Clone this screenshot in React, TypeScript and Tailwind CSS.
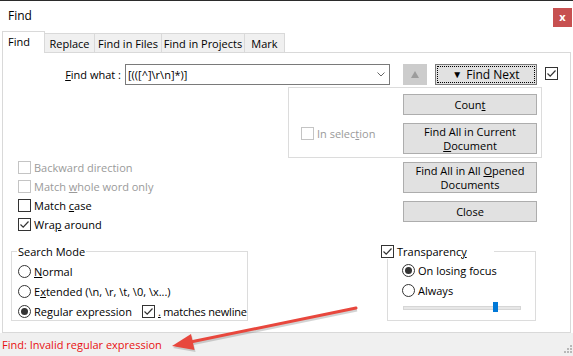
import React from "react";

const FONT = "'Open Sans', 'Liberation Sans', sans-serif";

function CheckBox(props: { checked?: boolean; disabled?: boolean }) {
  return (
    <span
      className={
        "inline-flex w-[13px] h-[13px] shrink-0 border bg-white items-center justify-center " +
        (props.disabled ? "border-[#c4c4c4]" : "border-[#333333]")
      }
    >
      {props.checked && (
        <svg width="11" height="11" viewBox="0 0 11 11">
          <path d="M1.5 5.5 L4.2 8.2 L9.5 2.5" fill="none" stroke="#333" strokeWidth="1.2" />
        </svg>
      )}
    </span>
  );
}

function Radio(props: { checked?: boolean }) {
  return (
    <span className="inline-flex w-[13px] h-[13px] shrink-0 rounded-full border border-[#333333] bg-white items-center justify-center">
      {props.checked && <span className="w-[7px] h-[7px] rounded-full bg-[#333333]" />}
    </span>
  );
}

function Btn(props: { children: React.ReactNode; tall?: boolean; className?: string }) {
  return (
    <div
      className={
        "w-[134px] flex flex-col items-center justify-center bg-[#e1e1e1] border border-[#adadad] text-black leading-[14px] text-center " +
        (props.tall ? "h-[31px] " : "h-[21px] ") +
        (props.className ?? "")
      }
    >
      {props.children}
    </div>
  );
}

function CheckRow(props: { checked?: boolean; disabled?: boolean; children: React.ReactNode }) {
  return (
    <div className="h-[19px] flex items-center gap-[3px] pl-[15px]">
      <CheckBox checked={props.checked} disabled={props.disabled} />
      <span className={props.disabled ? "text-[#9a9a9a]" : "text-black"}>{props.children}</span>
    </div>
  );
}

const tabs = [
  { name: "Replace", w: "w-[50px]" },
  { name: "Find in Files", w: "w-[67px]" },
  { name: "Find in Projects", w: "w-[83px]" },
  { name: "Mark", w: "w-[40px]" },
];

export default function App() {
  return (
    <div
      className="relative w-[573px] h-[356px] bg-white border-t border-[#2b2b2b] flex flex-col text-[11px] leading-[15px] text-black overflow-hidden"
      style={{ fontFamily: FONT }}
    >
      {/* title bar */}
      <div className="h-[30px] flex items-start justify-between">
        <div className="pl-[8px] pt-[7px] text-[12px]">Find</div>
        <div className="mt-[7px] mr-[1px] w-[19px] h-[19px] bg-[#c75050] flex items-center justify-center text-white text-[11px] font-bold leading-none pb-[2px]">
          x
        </div>
      </div>

      {/* tabs */}
      <div className="h-[21px] flex items-end pl-[2px]">
        <div className="relative z-10 -mb-px h-[22px] w-[43px] bg-white border border-b-0 border-[#d9d9d9] pl-[5px] pt-[2px]">
          Find
        </div>
        {tabs.map((t) => (
          <div
            key={t.name}
            className={
              "h-[19px] bg-[#f0f0f0] border border-l-0 border-b-0 border-[#d9d9d9] flex items-center justify-center " +
              t.w
            }
          >
            {t.name}
          </div>
        ))}
      </div>

      {/* pane */}
      <div className="flex-1 mx-[2px] border border-[#d9d9d9] flex flex-col">
        {/* find what row */}
        <div className="mt-[11px] flex items-center h-[21px]">
          <div className="w-[118px] text-right">
            <u>F</u>ind what :
          </div>
          <div className="ml-[4px] w-[265px] h-[21px] border border-[#7a7a7a] flex items-center justify-between pl-[2px] pr-[4px]">
            <span>{"[(([^]\\r\\n]*)]"}</span>
            <svg width="8" height="5" viewBox="0 0 8 5">
              <path d="M0.5 0.5 L4 4 L7.5 0.5" fill="none" stroke="#666" strokeWidth="1" />
            </svg>
          </div>
          <div className="ml-[13px] w-[24px] h-[21px] bg-[#cccccc] flex items-center justify-center">
            <svg width="8" height="7" viewBox="0 0 8 7">
              <path d="M4 0 L8 7 L0 7 Z" fill="#9c9c9c" />
            </svg>
          </div>
          <div className="ml-[8px] w-[102px] h-[21px] bg-[#e1e1e1] border border-[#7a7a7a] outline-1 outline-dotted outline-black outline-offset-[-3px] flex items-center justify-center gap-[4px] text-[12px]">
            <span className="text-[10px]">▼</span>
            <span>Find Next</span>
          </div>
          <div className="ml-[8px]">
            <CheckBox checked />
          </div>
        </div>

        {/* middle area */}
        <div className="flex h-[149px]">
          <div className="w-[285px] pt-[73px]">
            <CheckRow disabled>Backward direction</CheckRow>
            <CheckRow disabled>
              Match <u>w</u>hole word only
            </CheckRow>
            <CheckRow>
              Match <u>c</u>ase
            </CheckRow>
            <CheckRow checked>
              Wra<u>p</u> around
            </CheckRow>
          </div>
          <div className="flex flex-col">
            <div className="mt-[2px] w-[254px] h-[71px] border border-[#dcdcdc] flex">
              <div className="w-[114px] pl-[12px] pt-[38px]">
                <div className="flex items-center gap-[3px] h-[14px]">
                  <CheckBox disabled />
                  <span className="text-[#9a9a9a]">
                    In selec<u>t</u>ion
                  </span>
                </div>
              </div>
              <div className="flex flex-col pt-[6px] gap-[8px]">
                <Btn>
                  <span>
                    Coun<u>t</u>
                  </span>
                </Btn>
                <Btn tall>
                  <span>Find All in Current</span>
                  <span>
                    <u>D</u>ocument
                  </span>
                </Btn>
              </div>
            </div>
            <div className="ml-[115px] mt-[4px] flex flex-col gap-[8px]">
              <Btn tall>
                <span>
                  Find All in All <u>O</u>pened
                </span>
                <span>Documents</span>
              </Btn>
              <Btn>Close</Btn>
            </div>
          </div>
        </div>

        {/* bottom groups */}
        <div className="mt-[10px] flex">
          <fieldset className="ml-[8px] w-[237px] h-[77px] border border-[#dcdcdc]">
            <legend className="ml-[5px] px-[1px]">Search Mode</legend>
            <div className="pt-[2px] pl-[6px]">
              <div className="h-[20px] flex items-center gap-[3px]">
                <Radio />
                <span>
                  <u>N</u>ormal
                </span>
              </div>
              <div className="h-[20px] flex items-center gap-[3px]">
                <Radio />
                <span>
                  E<u>x</u>tended (\n, \r, \t, \0, \x...)
                </span>
              </div>
              <div className="h-[20px] flex items-center whitespace-nowrap">
                <div className="w-[124px] shrink-0 flex items-center gap-[3px]">
                  <Radio checked />
                  <span>
                    Re<u>g</u>ular expression
                  </span>
                </div>
                <div className="flex items-center gap-[3px] shrink-0 tracking-[-0.2px]">
                  <CheckBox checked />
                  <span>
                    <u>.</u> matches newline
                  </span>
                </div>
              </div>
            </div>
          </fieldset>

          <fieldset className="ml-[139px] w-[149px] h-[77px] border border-[#dcdcdc]">
            <legend className="-ml-[7px] w-[113px] bg-white flex items-center gap-[3px]">
              <CheckBox checked />
              <span>
                Transparenc<u>y</u>
              </span>
            </legend>
            <div className="pt-[1px] pl-[14px]">
              <div className="h-[20px] flex items-center gap-[3px]">
                <Radio checked />
                <span>On losing focus</span>
              </div>
              <div className="h-[20px] flex items-center gap-[3px]">
                <Radio />
                <span>Always</span>
              </div>
              <div className="mt-[2px] h-[11px] flex items-center pl-[1px]">
                <div className="relative w-[118px] h-[4px] bg-[#e7e7e7] border border-[#d6d6d6]">
                  <div className="absolute left-[89px] -top-[5px] w-[5px] h-[10px] bg-[#0078d7]" />
                </div>
              </div>
            </div>
          </fieldset>
        </div>
      </div>

      {/* status bar */}
      <div className="h-[23px] bg-[#f0f0f0] flex items-center justify-between pl-[2px] pr-[1px]">
        <span className="text-[#e81010] text-[11px]">Find: Invalid regular expression</span>
        <svg width="10" height="10" viewBox="0 0 10 10" className="self-end mb-[2px]">
          {[
            [8, 0],
            [8, 3],
            [5, 3],
            [8, 6],
            [5, 6],
            [2, 6],
          ].map(([x, y]) => (
            <rect key={`${x}-${y}`} x={x} y={y + 1} width="2" height="2" fill="#b8b8b8" />
          ))}
        </svg>
      </div>

      {/* annotation arrow */}
      <svg className="absolute inset-0 pointer-events-none" width="573" height="356" viewBox="0 0 573 356">
        <g opacity="0.25" transform="translate(1,2)">
          <line x1="356" y1="307" x2="190" y2="341" stroke="#555" strokeWidth="3" />
          <path d="M172 345 L191 333 L194.5 349 Z" fill="#555" />
        </g>
        <line x1="356" y1="307" x2="188" y2="341.5" stroke="#e8473d" strokeWidth="3" strokeLinecap="round" />
        <path d="M172 345 L191 333 L194.5 349 Z" fill="#e8473d" />
      </svg>
    </div>
  );
}
